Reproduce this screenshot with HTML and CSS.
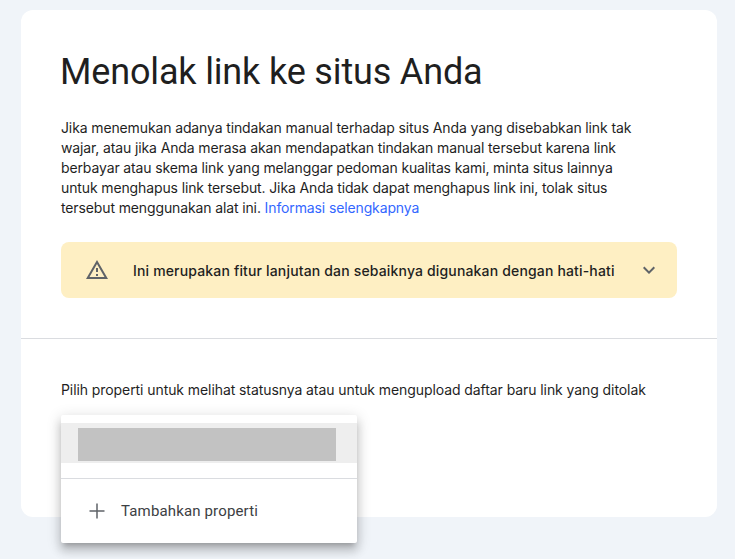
FILE: index.html
```html
<!DOCTYPE html>
<html lang="id">
<head>
<meta charset="utf-8">
<title>Menolak link ke situs Anda</title>
<link rel="stylesheet" href="styles.css">
</head>
<body>
<main class="card">
  <section class="top">
    <h1 class="title">Menolak link ke situs Anda</h1>
    <p class="intro">Jika menemukan adanya tindakan manual terhadap situs Anda yang disebabkan link tak<br>wajar, atau jika Anda merasa akan mendapatkan tindakan manual tersebut karena link<br>berbayar atau skema link yang melanggar pedoman kualitas kami, minta situs lainnya<br>untuk menghapus link tersebut. Jika Anda tidak dapat menghapus link ini, tolak situs<br>tersebut menggunakan alat ini. <a class="link" href="#">Informasi selengkapnya</a></p>
    <div class="banner">
      <svg class="warn" width="24" height="24" viewBox="0 0 24 24"><path fill="#5f6368" d="M12 5.99 19.53 19H4.47L12 5.99M12 2 1 21h22L12 2zm1 14h-2v2h2v-2zm0-6h-2v4h2v-4z"/></svg>
      <span class="banner-text">Ini merupakan fitur lanjutan dan sebaiknya digunakan dengan hati-hati</span>
      <svg class="chev" width="24" height="24" viewBox="0 0 24 24"><path fill="#5f6368" d="M7.41 8.59 12 13.17l4.59-4.58L18 10l-6 6-6-6z"/></svg>
    </div>
  </section>
  <section class="bottom">
    <p class="prompt">Pilih properti untuk melihat statusnya atau untuk mengupload daftar baru link yang ditolak</p>
    <div class="menu">
      <div class="menu-selected"><div class="redacted"></div></div>
      <div class="menu-add">
        <svg class="plus" width="24" height="24" viewBox="0 0 24 24"><path fill="#5f6368" d="M19.5 12.75h-6.75v6.75h-1.5v-6.75H4.5v-1.5h6.75V4.5h1.5v6.75h6.75z"/></svg>
        <span class="add-text">Tambahkan properti</span>
      </div>
    </div>
  </section>
</main>
</body>
</html>
```
FILE: styles.css
```css
* { box-sizing: border-box; }
html, body { margin: 0; height: 100%; }
body {
  background: #f0f4f9;
  padding: 10px 18px 42px 21px;
  overflow: hidden;
  font-family: "Inter", "Roboto", sans-serif;
  color: #1f1f1f;
}
.card {
  background: #fff;
  border-radius: 12px;
  height: 507px;
  width: 696px;
  position: relative;
}
.top {
  padding: 40px 40px 40px;
  height: 329px;
  border-bottom: 1px solid #dadce0;
}
.title {
  margin: 0 0 0 -1px;
  font-family: "Roboto", sans-serif;
  font-weight: 400;
  font-size: 36px;
  line-height: 44px;
  letter-spacing: -0.16px;
}
.intro {
  margin: 24px 0 0;
  font-size: 14px;
  line-height: 20px;
  letter-spacing: -0.125px;
}
.link { color: #3367ff; text-decoration: none; }
.banner {
  margin-top: 24px;
  height: 56px;
  background: #feefc3;
  border-radius: 8px;
  display: flex;
  align-items: center;
  padding: 0 16px 0 24px;
}
.warn { flex: none; }
.banner-text {
  margin-left: 24px;
  font-size: 14px;
  font-weight: 500;
  letter-spacing: 0.16px;
  flex: 1;
  white-space: nowrap;
}
.chev { flex: none; }
.bottom { padding: 41px 40px 0; }
.prompt {
  margin: 0;
  font-size: 14px;
  line-height: 20px;
  letter-spacing: -0.08px;
}
.menu {
  position: absolute;
  left: 40px;
  top: 405px;
  width: 296px;
  height: 128px;
  background: #fff;
  border-radius: 2px;
  padding-top: 8px;
  box-shadow: 0 5px 5px -3px rgba(0,0,0,.2), 0 8px 10px 1px rgba(0,0,0,.14), 0 3px 14px 2px rgba(0,0,0,.12);
}
.menu-selected {
  height: 40px;
  background: #eee;
  padding: 5px 21px 0 17px;
}
.redacted { height: 33px; background: #c2c2c2; }
.menu-add {
  margin-top: 15px;
  border-top: 1px solid #dadce0;
  height: 65px;
  display: flex;
  align-items: center;
  padding-left: 24px;
}
.add-text {
  margin-left: 12px;
  font-family: "Roboto", sans-serif;
  font-size: 15px;
  color: #3c4043;
  letter-spacing: 0.15px;
}
```
